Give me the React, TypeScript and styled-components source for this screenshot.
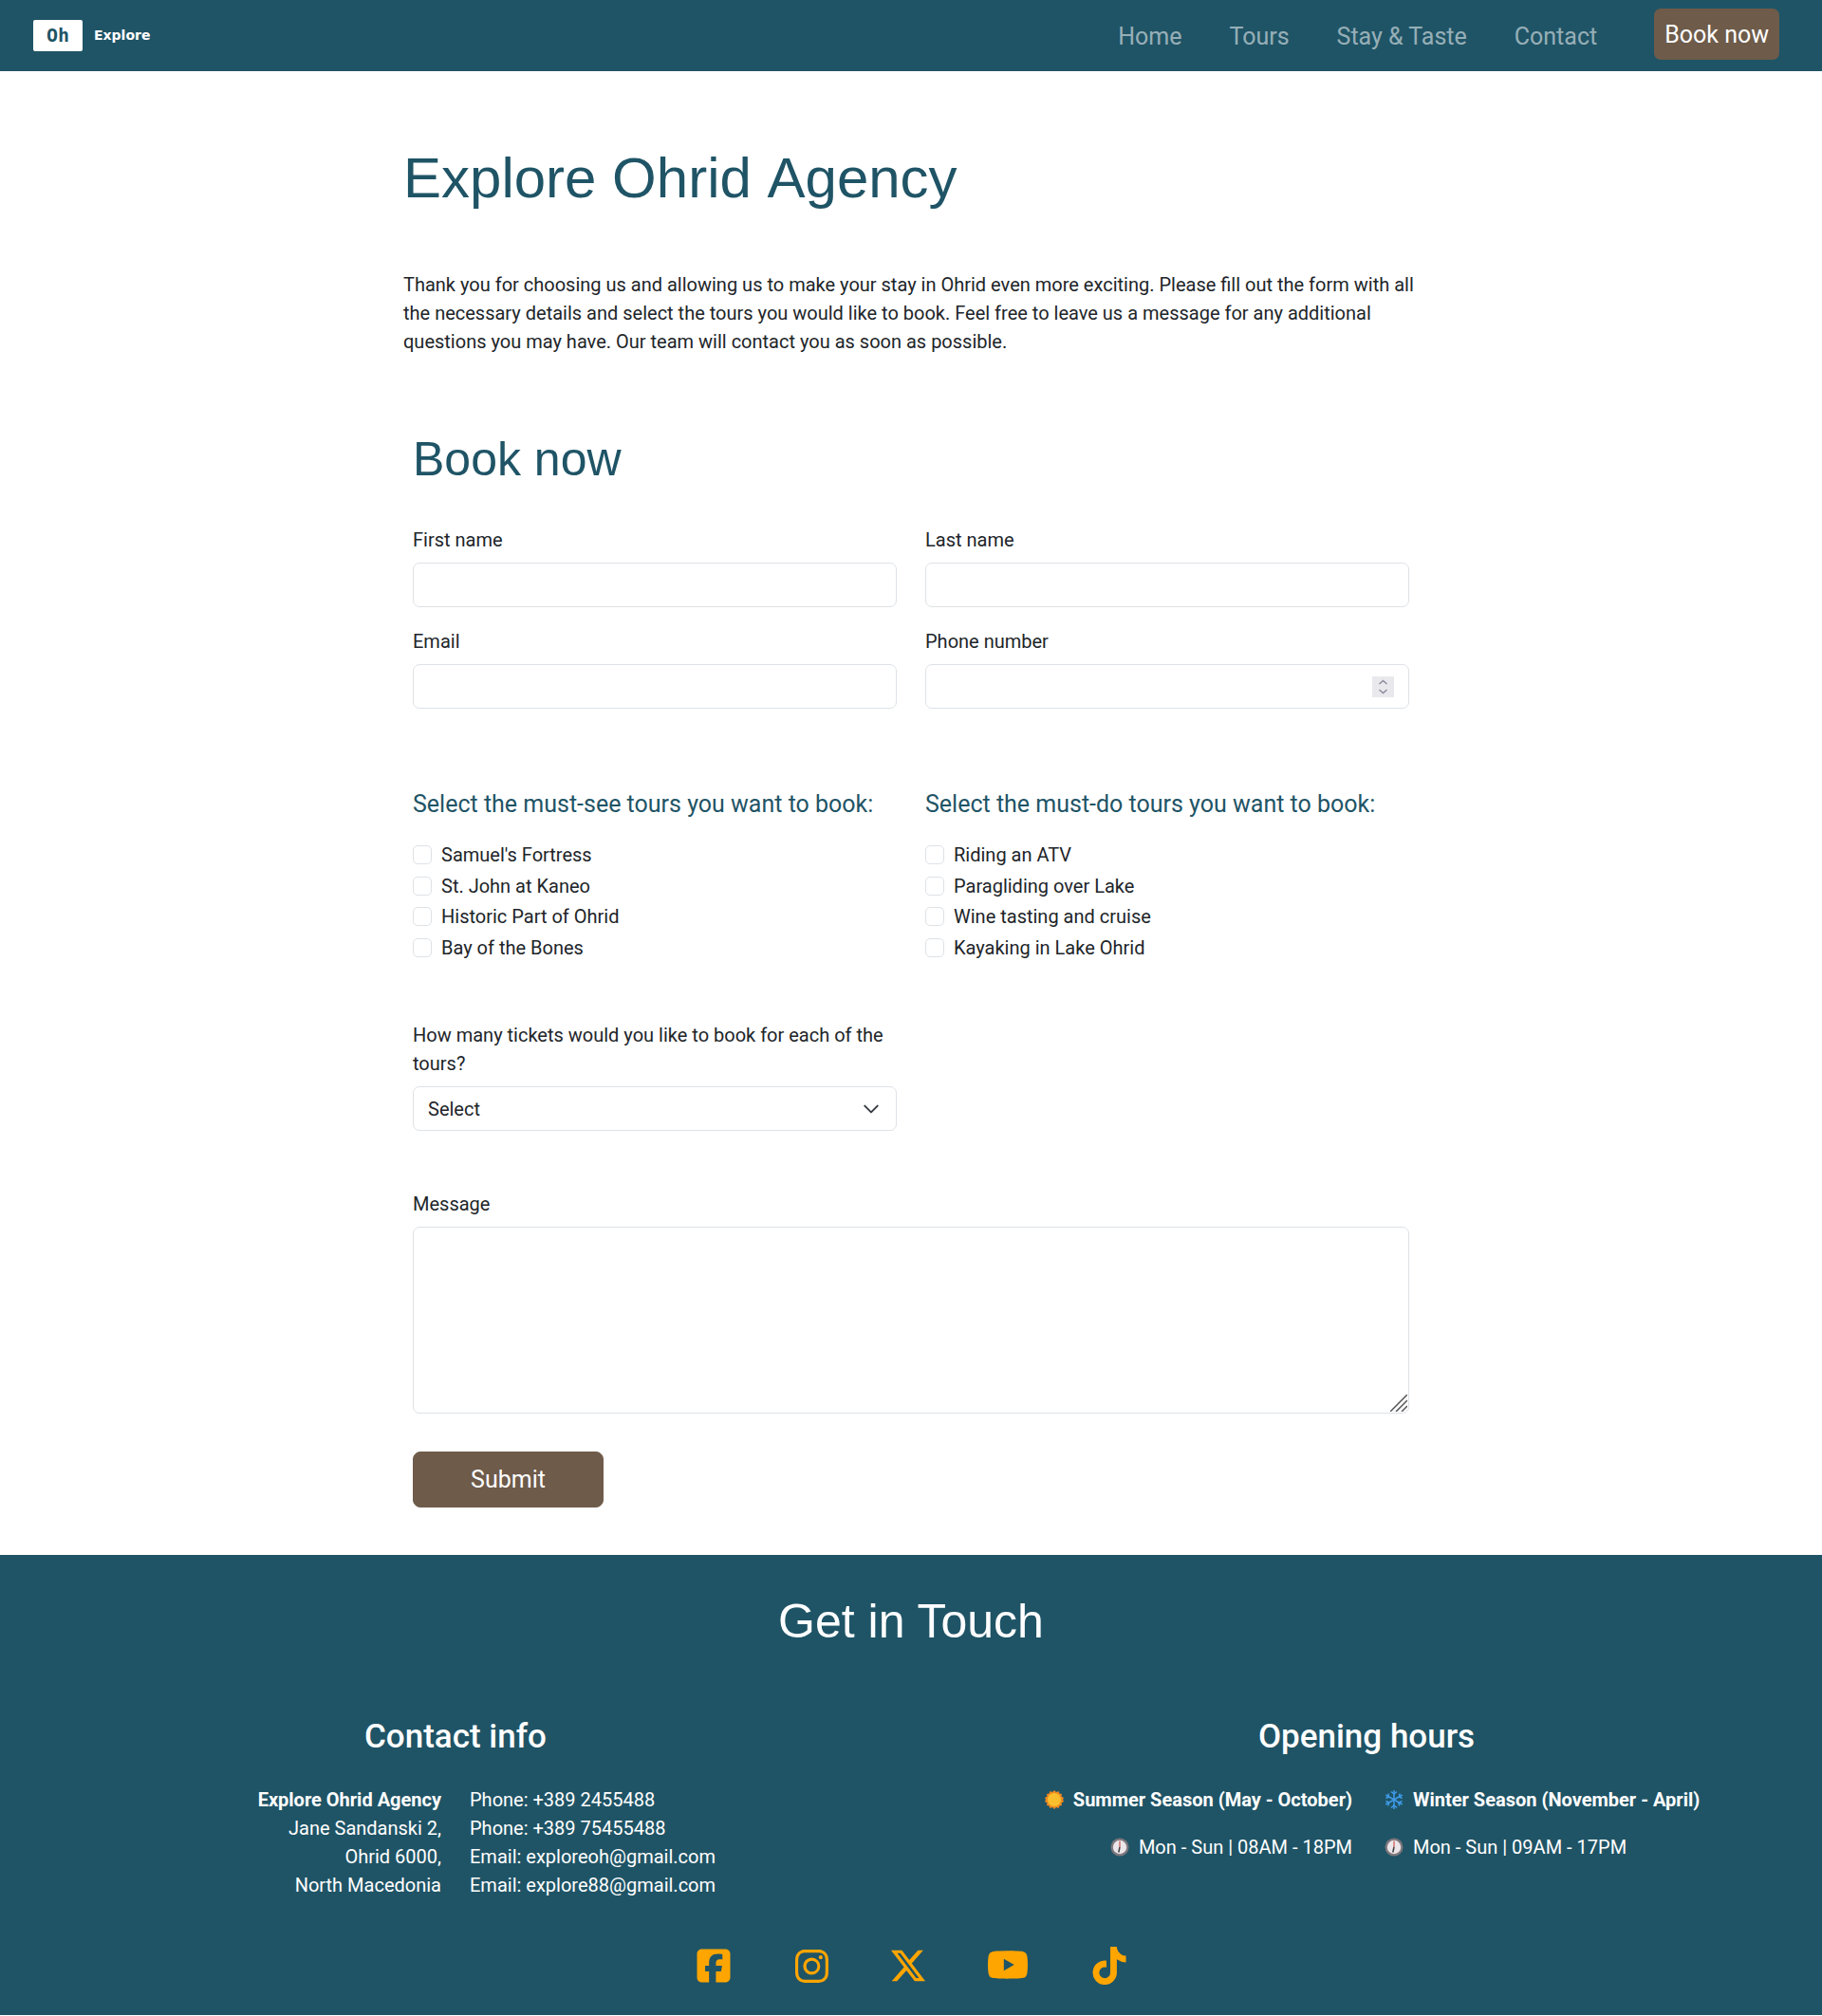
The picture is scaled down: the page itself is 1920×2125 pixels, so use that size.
import styled, { createGlobalStyle } from "styled-components";
import { BsInstagram, BsTwitterX, BsYoutube } from "react-icons/bs";
import { FaSquareFacebook, FaTiktok } from "react-icons/fa6";

const GlobalStyle = createGlobalStyle`
  * {
    box-sizing: border-box;
  }
  body {
    margin: 0;
    background: #fff;
    color: #212529;
    font-family: Roboto, sans-serif;
    font-size: 20px;
    line-height: 1.5;
  }
`;

const Nav = styled.nav`
  display: flex;
  align-items: center;
  justify-content: space-between;
  height: 75px;
  padding: 0 45px 0 35px;
  background: #1f5466;
`;

const Brand = styled.div`
  display: flex;
  align-items: center;
  gap: 12px;
`;

const LogoBox = styled.span`
  display: block;
  width: 52px;
  height: 33px;
  background: #fff;
  border-radius: 2px;
  color: #1f5466;
  font: bold 20px/33px "DejaVu Sans Mono", monospace;
  text-align: center;
`;

const LogoText = styled.span`
  margin-bottom: 2px;
  color: #fff;
  font: bold 14px "DejaVu Sans", sans-serif;
`;

const NavLinks = styled.div`
  display: flex;
  align-items: center;
  gap: 50px;
`;

const NavLink = styled.a`
  color: rgba(255, 255, 255, 0.55);
  font-size: 25px;
  line-height: 38px;
  margin-top: 3px;
`;

const NavButton = styled.a`
  margin-left: 10px;
  margin-bottom: 3px;
  padding: 7px 11px 5px;
  background: #6e5b4a;
  border-radius: 7px;
  color: #fff;
  font-size: 25px;
  line-height: 42px;
`;

const Main = styled.main`
  width: 1070px;
  margin: 0 auto;
  padding-top: 75px;
`;

const Title = styled.h1`
  margin: 0 0 59px;
  color: #1f5466;
  font: 400 60px/76px "Liberation Sans", Arial, sans-serif;
  font-kerning: none;
`;

const Intro = styled.p`
  margin: 0 0 79px;
  font-size: 20px;
  line-height: 30px;
`;

const Form = styled.form`
  padding: 0 10px 50px;
`;

const FormTitle = styled.h2`
  margin: 0 0 40px;
  color: #1f5466;
  font: 400 50px/60px "Liberation Sans", Arial, sans-serif;
`;

const Row = styled.div`
  display: grid;
  grid-template-columns: 510px 510px;
  column-gap: 30px;
`;

const Field = styled.div`
  margin-bottom: 21px;
`;

const Label = styled.label`
  display: block;
  margin-bottom: 9px;
  font-size: 20px;
  line-height: 30px;
`;

const Input = styled.input`
  display: block;
  width: 100%;
  height: 47px;
  padding: 6px 16px;
  border: 1px solid #dee2e6;
  border-radius: 7px;
  background: #fff;
  font: inherit;

  &::-webkit-inner-spin-button {
    appearance: none;
    width: 23px;
    height: 22px;
    margin: 1px -1px 0 0;
    opacity: 1;
    background: #e9e9ed
      url("data:image/svg+xml,%3csvg xmlns='http://www.w3.org/2000/svg' viewBox='0 0 23 22'%3e%3cpath fill='none' stroke='%238f8a9c' stroke-width='1.4' d='m7.500 8 4-3.500 4 3.500M7.500 14l4 3.500 4-3.500'/%3e%3c/svg%3e")
      no-repeat center;
  }
`;

const SelectBox = styled.select`
  display: block;
  width: 100%;
  height: 47px;
  padding: 6px 15px;
  border: 1px solid #dee2e6;
  border-radius: 7px;
  appearance: none;
  background: #fff
    url("data:image/svg+xml,%3csvg xmlns='http://www.w3.org/2000/svg' viewBox='0 0 16 16'%3e%3cpath fill='none' stroke='%23343a40' stroke-linecap='round' stroke-linejoin='round' stroke-width='1.7' d='m2 5 6 6 6-6'/%3e%3c/svg%3e")
    no-repeat right 17px center / 18px 18px;
  color: #212529;
  font: inherit;
`;

const TextArea = styled.textarea`
  display: block;
  width: 100%;
  height: 197px;
  border: 1px solid #dee2e6;
  border-radius: 7px;
  resize: none;
  background: #fff
    url("data:image/svg+xml,%3csvg xmlns='http://www.w3.org/2000/svg' viewBox='0 0 18 18'%3e%3cpath fill='none' stroke='%23555' stroke-width='1.5' d='M0 18 18 0M6 18 18 6M12 18l6-6'/%3e%3c/svg%3e")
    no-repeat right 1px bottom 1px / 18px 18px;
  font: inherit;
`;

const Tours = styled(Row)`
  margin-top: 62px;
`;

const TourTitle = styled.h3`
  margin: 0 0 19px;
  color: #1f5466;
  font-size: 25px;
  font-weight: 400;
  line-height: 36px;
`;

const CheckRow = styled.label`
  display: flex;
  align-items: center;
  gap: 10px;
  height: 32.5px;
`;

const Check = styled.input`
  width: 20px;
  height: 20px;
  margin: 0;
  appearance: none;
  background: #fff;
  border: 1px solid #dee2e6;
  border-radius: 5px;
`;

const Tickets = styled(Row)`
  margin-top: 61px;
`;

const MessageField = styled.div`
  margin-top: 62px;
`;

const Submit = styled.button`
  display: block;
  width: 201px;
  height: 59px;
  margin-top: 40px;
  padding: 0;
  background: #6e5b4a;
  border: 1px solid #6e5b4a;
  border-radius: 8px;
  color: #fff;
  font: inherit;
  font-size: 25px;
`;

const Footer = styled.footer`
  height: 485px;
  padding-top: 40px;
  background: #1f5466;
  color: #fff;
`;

const FooterTitle = styled.h2`
  margin: 0 0 72px;
  font: 400 50px/60px "Liberation Sans", Arial, sans-serif;
  text-align: center;
`;

const FooterColumns = styled.div`
  display: grid;
  grid-template-columns: 960px 960px;
`;

const ColumnTitle = styled.h3`
  margin: 0 0 31px;
  font-size: 35px;
  font-weight: 500;
  line-height: 40px;
  text-align: center;
`;

const InfoGrid = styled.div`
  display: grid;
  grid-template-columns: 1fr 1fr;
  column-gap: 30px;
`;

const InfoCell = styled.div<{ $right?: boolean }>`
  line-height: 30px;
  text-align: ${(props) => (props.$right ? "right" : "left")};
`;

const InfoBold = styled.div`
  font-weight: 700;
`;

const SeasonLine = styled.div<{ $bold?: boolean }>`
  display: flex;
  align-items: center;
  gap: 10px;
  height: 30px;
  margin-bottom: 20px;
  font-weight: ${(props) => (props.$bold ? 700 : 400)};
`;

const SeasonColumn = styled.div<{ $right?: boolean }>`
  display: flex;
  flex-direction: column;
  align-items: ${(props) => (props.$right ? "flex-end" : "flex-start")};
  padding-left: ${(props) => (props.$right ? "0" : "4px")};
`;

const Socials = styled.div`
  display: flex;
  justify-content: center;
  align-items: center;
  gap: 66px;
  height: 40px;
  margin-top: 50px;
  color: #ffa500;

  svg {
    width: auto;
  }
`;

function SunIcon() {
  return (
    <svg width="20" height="20" viewBox="0 0 20 20">
      <path
        d="M10 0l2 2 2.500-1 1 2.500 2.500.5-.5 2.500L20 8l-1 2 1 2-2.500 1.500.5 2.500-2.500.5-1 2.500-2.500-1-2 2-2-2-2.500 1-1-2.500L2 16l.5-2.500L0 12l1-2-1-2 2.500-1.500L2 4l2.500-.5 1-2.500L8 2z"
        fill="#ee8a1f"
      />
      <circle cx="10" cy="10" r="7" fill="#fbbf2d" />
    </svg>
  );
}

function SnowIcon() {
  return (
    <svg width="20" height="20" viewBox="0 0 20 20" stroke="#3f9be8" strokeWidth="1.5" fill="none">
      <path d="M10 0v20M1.300 5l17.400 10M18.700 5 1.300 15" />
      <path d="M7 1.500 10 4l3-2.500M7 18.500l3-2.500 3 2.500M1.500 8.500 4.500 7 4 3.500M15.500 16.500l-.5-3.500 3.500-1.500M18.500 8.500 15.500 7l.5-3.500M4 16.500l.5-3.500-3-1.500" />
    </svg>
  );
}

function ClockIcon() {
  return (
    <svg width="20" height="20" viewBox="0 0 20 20">
      <circle cx="10" cy="10" r="9.500" fill="#7d777c" />
      <circle cx="10" cy="10" r="7.200" fill="#ece6ea" />
      <path d="M10 10V3.500" stroke="#c0392b" strokeWidth="1" />
      <path d="M10 10 8.800 15.500" stroke="#444" strokeWidth="1.600" />
    </svg>
  );
}

const mustSee = ["Samuel's Fortress", "St. John at Kaneo", "Historic Part of Ohrid", "Bay of the Bones"];
const mustDo = ["Riding an ATV", "Paragliding over Lake", "Wine tasting and cruise", "Kayaking in Lake Ohrid"];

function TourList(props: { title: string; items: string[] }) {
  return (
    <div>
      <TourTitle>{props.title}</TourTitle>
      {props.items.map((item) => (
        <CheckRow key={item}>
          <Check type="checkbox" />
          {item}
        </CheckRow>
      ))}
    </div>
  );
}

export default function App() {
  return (
    <>
      <GlobalStyle />
      <Nav>
        <Brand>
          <LogoBox>Oh</LogoBox>
          <LogoText>Explore</LogoText>
        </Brand>
        <NavLinks>
          <NavLink>Home</NavLink>
          <NavLink>Tours</NavLink>
          <NavLink>Stay &amp; Taste</NavLink>
          <NavLink>Contact</NavLink>
          <NavButton>Book now</NavButton>
        </NavLinks>
      </Nav>

      <Main>
        <Title>Explore Ohrid Agency</Title>
        <Intro>
          Thank you for choosing us and allowing us to make your stay in Ohrid even more exciting. Please fill out the
          form with all the necessary details and select the tours you would like to book. Feel free to leave us a
          message for any additional questions you may have. Our team will contact you as soon as possible.
        </Intro>

        <Form>
          <FormTitle>Book now</FormTitle>
          <Row>
            <Field>
              <Label>First name</Label>
              <Input type="text" />
            </Field>
            <Field>
              <Label>Last name</Label>
              <Input type="text" />
            </Field>
            <Field>
              <Label>Email</Label>
              <Input type="email" />
            </Field>
            <Field>
              <Label>Phone number</Label>
              <Input type="number" />
            </Field>
          </Row>

          <Tours>
            <TourList title="Select the must-see tours you want to book:" items={mustSee} />
            <TourList title="Select the must-do tours you want to book:" items={mustDo} />
          </Tours>

          <Tickets>
            <div>
              <Label>How many tickets would you like to book for each of the tours?</Label>
              <SelectBox defaultValue="Select">
                <option>Select</option>
              </SelectBox>
            </div>
          </Tickets>

          <MessageField>
            <Label>Message</Label>
            <TextArea />
          </MessageField>

          <Submit type="button">Submit</Submit>
        </Form>
      </Main>

      <Footer>
        <FooterTitle>Get in Touch</FooterTitle>
        <FooterColumns>
          <div>
            <ColumnTitle>Contact info</ColumnTitle>
            <InfoGrid>
              <InfoCell $right>
                <InfoBold>Explore Ohrid Agency</InfoBold>
                <div>Jane Sandanski 2,</div>
                <div>Ohrid 6000,</div>
                <div>North Macedonia</div>
              </InfoCell>
              <InfoCell>
                <div>Phone: +389 2455488</div>
                <div>Phone: +389 75455488</div>
                <div>Email: exploreoh@gmail.com</div>
                <div>Email: explore88@gmail.com</div>
              </InfoCell>
            </InfoGrid>
          </div>
          <div>
            <ColumnTitle>Opening hours</ColumnTitle>
            <InfoGrid>
              <SeasonColumn $right>
                <SeasonLine $bold>
                  <SunIcon />
                  Summer Season (May - October)
                </SeasonLine>
                <SeasonLine>
                  <ClockIcon />
                  Mon - Sun | 08AM - 18PM
                </SeasonLine>
              </SeasonColumn>
              <SeasonColumn>
                <SeasonLine $bold>
                  <SnowIcon />
                  Winter Season (November - April)
                </SeasonLine>
                <SeasonLine>
                  <ClockIcon />
                  Mon - Sun | 09AM - 17PM
                </SeasonLine>
              </SeasonColumn>
            </InfoGrid>
          </div>
        </FooterColumns>
        <Socials>
          <FaSquareFacebook size={40} />
          <BsInstagram size={35} />
          <BsTwitterX size={36} />
          <BsYoutube size={42} />
          <FaTiktok size={40} />
        </Socials>
      </Footer>
    </>
  );
}
